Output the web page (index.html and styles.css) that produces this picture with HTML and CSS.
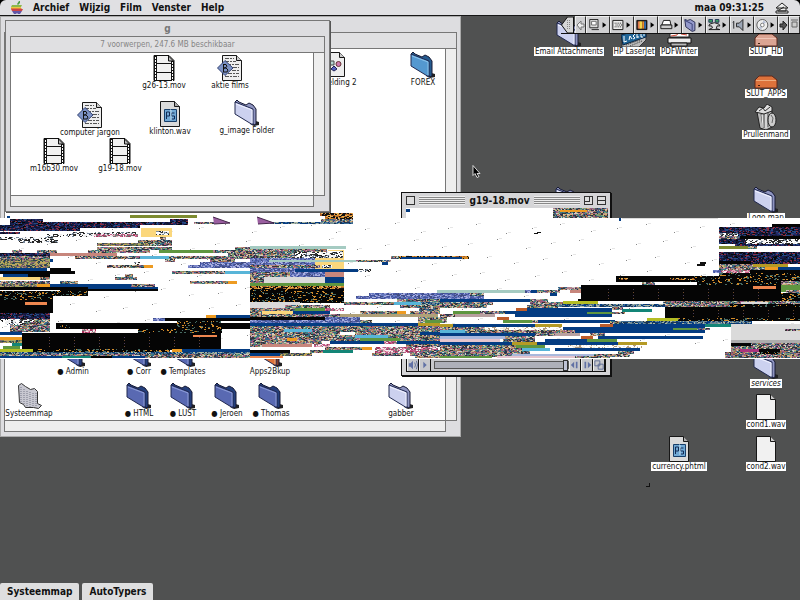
FILE: index.html
```html
<!DOCTYPE html>
<html lang="nl">
<head>
<meta charset="utf-8">
<title>Bureaublad</title>
<link rel="stylesheet" href="styles.css">
</head>
<body>
<svg class="defs" aria-hidden="true">
  <symbol id="folder" viewBox="0 0 26 26">
    <path d="M18 20l7 2v3l-5 1-4-2z" fill="#222"/>
    <path d="M1 2l2-2 2 2 7 3 3-2 4 2 3 4v15l-2 1z" fill="var(--side)" stroke="#181b35"/>
    <path d="M1 2l18 7v16L1 14z" fill="var(--face)" stroke="#20284f"/>
    <path d="M2 4l16 6v13" fill="none" stroke="var(--shine)"/>
  </symbol>
  <symbol id="film" viewBox="0 0 26 26">
    <path d="M3 .5h15l5 5v20H3z" fill="#f1f1f1" stroke="#111"/>
    <path d="M4.500 1v24M21.500 6v20" stroke="#111" stroke-width="3"/>
    <path d="M4.500 2v23M21.500 7v19" stroke="#fff" stroke-width="1" stroke-dasharray="2 1"/>
    <path d="M6 8.500h14M6 17.500h14" stroke="#111"/><path d="M17.500 1v5h5z" fill="#bbb" stroke="#111"/>
  </symbol>
  <symbol id="doc" viewBox="0 0 26 26">
    <path d="M3.500 .5h14l5 5v20h-19z" fill="#f1f1f1" stroke="#171717"/>
    <path d="M17.500 .5v5h5" fill="#ccc" stroke="#171717"/>
  </symbol>
  <symbol id="bbedit" viewBox="0 0 26 26">
    <path d="M5.500 .5h14l5 5v20h-19z" fill="#eee" stroke="#171717"/><path d="M19.500 .5v5h5" fill="#ccc" stroke="#171717"/>
    <path d="M8 3.500h9M8 6.500h11M10 9.500h12M16 12.500h6M15 15.500h7M11 18.500h11M8 21.500h14" stroke="#555" stroke-dasharray="4 1 2 1"/>
    <path d="M.5 13L8 5.500l8 7.500-8 7.500z" fill="#7c92c5" stroke="#334273"/>
    <path d="M6.500 9v8M6 9.500h3l1 2-2 1.500h-1 2l2 2-1 2H6" fill="none" stroke="#111"/>
  </symbol>
  <symbol id="photo" viewBox="0 0 26 26">
    <path d="M3.500 .5h14l5 5v20h-19z" fill="#dadada" stroke="#171717"/><path d="M17.500 .5v5h5" fill="#aaa" stroke="#171717"/>
    <path d="M7.500 8.500h12v12h-12z" fill="#71a9d5" stroke="#173e69"/>
    <path d="M9.500 18v-7h3v4h-3M17.500 12h-3v3h3v3h-3" fill="none" stroke="#122b54"/><path d="M13 9h1v10" stroke="#c3dff0" fill="none"/>
  </symbol>
  <symbol id="image" viewBox="0 0 26 26">
    <path d="M3.500 .5h15l5 5v19h-20z" fill="#eee" stroke="#171717"/><path d="M18.500 .5v5h5" fill="#ccc" stroke="#171717"/>
    <path d="M8 9h5v4H8z" fill="#b6d5d1" stroke="#444"/><circle cx="17.500" cy="12" r="2.500" fill="#ce7aaf" stroke="#633"/>
    <path d="M10 17l3-3 3 3-3 2z" fill="#5762c0" stroke="#225"/>
  </symbol>
  <symbol id="system" viewBox="0 0 26 26">
    <path d="M2.500 2.500l3-2 4 3 5 3 4-1 3 3v12l4 2-3 3-5-1-8 0-2-3-4-2z" fill="#c8c8d1" stroke="#333"/>
    <path d="M5 4v16M8 6v15M11 8v16M14 9v15M17 10v14M20 10v13" stroke="#777989" stroke-dasharray="1 1"/>
  </symbol>
  <symbol id="drive" viewBox="0 0 26 26">
    <path d="M2 17l4-4h13l5 4v8H2z" fill="var(--face)" stroke="#5d281c"/><path d="M3 17.500h20" stroke="var(--shine)"/>
    <path d="M5 22.500h2" stroke="#421"/>
  </symbol>
  <symbol id="trash" viewBox="0 0 26 26">
    <path d="M4 8l3 16 6 2 6-3V7z" fill="#bbb" stroke="#222"/>
    <path d="M8 10l2 13M11 10v14M15 9v14" stroke="#555"/><path d="M9 11l1 12M13 10v14" stroke="#eee"/>
    <path d="M2 8l4-5 5 1 3-4 5 3v4l-8 3z" fill="#ddd" stroke="#222"/><path d="M6 7l4-3 2 3 5-4" fill="none" stroke="#333"/>
    <ellipse cx="19" cy="16" rx="4" ry="7" fill="#ccc" stroke="#222"/><path d="M18 11l2 3-1 5" fill="none" stroke="#666"/>
  </symbol>
  <symbol id="laser" viewBox="0 0 26 26">
    <path d="M1 14l24-5v10l-7 7H1z" fill="#bbb" stroke="#333"/><path d="M0 14l25-7v9L2 24z" fill="#1f6496" stroke="#0b2544"/>
    <path d="M3 15v6l3-1M8 19l1-4 2 3M14 13l-2 2 2 2-2 1M16 16h2M16 12v5M20 11v5l2 0M23 9v6" stroke="#fff" fill="none"/>
    <path d="M5 24l14-5M9 25l12-5" stroke="#333" stroke-dasharray="1 1"/>
  </symbol>
  <symbol id="writer" viewBox="0 0 26 26">
    <path d="M4 8h19v8H4z" fill="#fff" stroke="#222"/><path d="M5 15l6-1 2-4 2 3 6 1" stroke="#d24b39" fill="none"/>
    <path d="M2 17h23v5H2z" fill="#eee" stroke="#111"/><path d="M5 22h16v3H5z" fill="#bbb" stroke="#111"/>
  </symbol>
</svg>

<header class="menubar">
  <nav class="menus" aria-label="Menu">
    <button aria-label="Apple"><svg class="apple" viewBox="0 0 12 13"><path d="M6 3l2-3h1v2L7 4z" fill="#4f9e45"/><path d="M1 4h10l-1 2H0z" fill="#8cb84a"/><path d="M0 6h10v1H0z" fill="#e8c943"/><path d="M0 7h10l1 1H0z" fill="#e38239"/><path d="M0 8h12l-1 2H1z" fill="#cb4448"/><path d="M1 10h10l-2 3H7L6 12l-1 1H3z" fill="#6256a7"/></svg></button>
    <button>Archief</button><button>Wijzig</button><button>Film</button><button>Venster</button><button>Help</button>
  </nav>
  <time>maa 09:31:25</time>
  <button aria-label="Programma’s"><svg class="appicon" viewBox="0 0 14 12"><path d="M1 6l6-5 6 5zM3 6v3h8V6M1 9h12v2H1z" fill="#eee" stroke="#222"/><path d="M4 8l5-3" stroke="#222"/></svg></button>
</header>

<main class="desktop">
  <section class="window back-window" aria-label="Map">
    <div class="titlebar"></div>
    <div class="info"></div>
    <div class="pane">
      <div class="item afbeelding"><svg><use href="#image"/></svg><span>Afbeelding 2</span></div>
      <div class="item forex sky"><svg><use href="#folder"/></svg><span>FOREX</span></div>
      <div class="item admin blue"><svg><use href="#folder"/></svg><span>● Admin</span></div>
      <div class="item corr blue"><svg><use href="#folder"/></svg><span>● Corr</span></div>
      <div class="item templates blue"><svg><use href="#folder"/></svg><span>● Templates</span></div>
      <div class="item apps orange"><svg><use href="#folder"/></svg><span>Apps2Bkup</span></div>
      <div class="item systeem"><svg><use href="#system"/></svg><span>Systeemmap</span></div>
      <div class="item html blue"><svg><use href="#folder"/></svg><span>● HTML</span></div>
      <div class="item lust blue"><svg><use href="#folder"/></svg><span>● LUST</span></div>
      <div class="item jeroen blue"><svg><use href="#folder"/></svg><span>● Jeroen</span></div>
      <div class="item thomas blue"><svg><use href="#folder"/></svg><span>● Thomas</span></div>
      <div class="item gabber"><svg><use href="#folder"/></svg><span>gabber</span></div>
    </div>
    <div class="vscroll"></div><div class="hscroll"></div><div class="corner"></div>
  </section>

  <section class="window g-window" aria-label="g">
    <h1 class="titlebar">g</h1>
    <div class="info">7 voorwerpen, 247.6 MB beschikbaar</div>
    <div class="pane">
      <div class="item g26"><svg><use href="#film"/></svg><span>g26-13.mov</span></div>
      <div class="item aktie"><svg><use href="#bbedit"/></svg><span>aktie films</span></div>
      <div class="item jargon"><svg><use href="#bbedit"/></svg><span>computer jargon</span></div>
      <div class="item klinton"><svg><use href="#photo"/></svg><span>klinton.wav</span></div>
      <div class="item gimage"><svg><use href="#folder"/></svg><span>g_image Folder</span></div>
      <div class="item m16"><svg><use href="#film"/></svg><span>m16b30.mov</span></div>
      <div class="item g19"><svg><use href="#film"/></svg><span>g19-18.mov</span></div>
    </div>
    <div class="vscroll"></div><div class="hscroll"></div><div class="corner"></div>
  </section>

  <div class="item boxed email"><svg><use href="#folder"/></svg><span>Email Attachments</span></div>
  <div class="item boxed hp"><svg><use href="#laser"/></svg><span>HP LaserJet</span></div>
  <div class="item boxed pdf"><svg><use href="#writer"/></svg><span>PDFWriter</span></div>
  <div class="item boxed hd pink"><svg><use href="#drive"/></svg><span>SLUT_HD</span></div>
  <div class="item boxed slutapps orange"><svg><use href="#drive"/></svg><span>SLUT_APPS</span></div>
  <div class="item boxed prullen"><svg><use href="#trash"/></svg><span>Prullenmand</span></div>
  <div class="item boxed logo"><svg><use href="#folder"/></svg><span>Logo map</span></div>
  <div class="item boxed services"><svg><use href="#folder"/></svg><span><i>services</i></span></div>
  <div class="item boxed cond1"><svg><use href="#doc"/></svg><span>cond1.wav</span></div>
  <div class="item boxed cond2"><svg><use href="#doc"/></svg><span>cond2.wav</span></div>
  <div class="item boxed currency"><svg><use href="#photo"/></svg><span>currency.phtml</span></div>
  <div class="item hidden-folder"><svg><use href="#folder"/></svg></div>
  <i class="crumb"></i>

  <section class="movie" aria-label="g19-18.mov">
    <div class="movie-title"><button class="box" aria-label="Sluit"></button><i class="grip"></i><h2>g19-18.mov</h2><i class="grip"></i><button class="box zoom" aria-label="Zoom"></button><button class="box fold" aria-label="Vouw"></button></div>
    <div class="screen"></div>
    <div class="player">
      <button aria-label="Volume"><svg viewBox="0 0 12 12"><path d="M1 4h2l3-3v10L3 8H1z"/><path d="M8 3q2 3 0 6M10 1q3 5 0 10" class="line"/></svg></button>
      <button aria-label="Speel"><svg viewBox="0 0 12 12"><path d="M4 2l4 4-4 4z"/></svg></button>
      <input type="range" aria-label="Positie" value="100">
      <button aria-label="Terug"><svg viewBox="0 0 12 12"><path d="M5 2v8L1 6zM7 2h2v8H7z"/></svg></button>
      <button aria-label="Vooruit"><svg viewBox="0 0 12 12"><path d="M7 2v8l4-4zM3 2h2v8H3z"/></svg></button>
      <button aria-label="Formaat"><svg viewBox="0 0 12 12"><path d="M1 1h6v6H1zM5 5h6v6H5z" class="line"/></svg></button>
    </div>
  </section>

  <canvas id="static" width="800" height="151"></canvas>

  <div class="strip">
    <button class="tab" aria-label="Regelstrip"><svg viewBox="0 0 13 16"><path d="M12 0H6L0 8l6 8h6z" fill="#d6d6d6" stroke="#111"/><path d="M6 3v10M8 3v10" stroke="#888" stroke-dasharray="1 1"/></svg></button>
    <button class="thin" aria-label="Links"><svg viewBox="0 0 9 16"><path d="M1 8l4-4v3h3v3H5v3z" fill="#eee" stroke="#777"/></svg></button>
    <button aria-label="AppleTalk"><svg viewBox="0 0 24 16"><path d="M3 2h9v9H3z" fill="#ddd" stroke="#222"/><path d="M5 4h5v4H5z" fill="#fff" stroke="#666"/><path d="M5 13h8" stroke="#222"/><path d="M17 5v6l4-3z"/></svg></button>
    <button aria-label="Bitdiepte"><svg viewBox="0 0 24 16"><path d="M2 3h11v10H2z" fill="#eee" stroke="#111"/><path d="M4 6h8M5 8h8M4 10h8" stroke="#111" stroke-dasharray="1 1"/><path d="M17 5v6l4-3z"/></svg></button>
    <button aria-label="Kleuren"><svg viewBox="0 0 24 16"><path d="M2 3h11v10H2z" fill="#111" stroke="#111"/><path d="M3 4h3v8H3z" fill="#dc7650"/><path d="M5 4h3v8H5z" fill="#eed64c"/><path d="M8 4h2v8H8z" fill="#eb8a26"/><path d="M10 4h2v8h-2z" fill="#356cab"/><path d="M17 5v6l4-3z"/></svg></button>
    <button aria-label="Printer"><svg viewBox="0 0 24 16"><path d="M5 3h7l1 5H3z" fill="#fff" stroke="#111"/><path d="M2 8h12v4H2z" fill="#ccc" stroke="#111"/><path d="M17 5v6l4-3z"/></svg></button>
    <button aria-label="Delen"><svg viewBox="0 0 24 16"><path d="M2 2l3 1 3-1 5 3v9l-3 1-7-5z" fill="#9499cb" stroke="#25294d"/><path d="M2 3l8 4v7" fill="none" stroke="#333b72"/><path d="M17 5v6l4-3z"/></svg></button>
    <button aria-label="Netwerk"><svg viewBox="0 0 24 16"><path d="M2 2h4v3H2zM9 2h4v3H9z" fill="#399f62" stroke="#235"/><path d="M3 7q5-3 10 0l1 2h-3l-1 3 4 1H2l4-2-1-2H2z" fill="#ddd" stroke="#111"/><path d="M17 5v6l4-3z"/></svg></button>
    <button aria-label="Geluid"><svg viewBox="0 0 24 16"><path d="M2 5l1-1v8M6 6h3l4-4v12L9 10H6z" fill="#9da7b7" stroke="#222"/><path d="M18 5v6l4-3z"/></svg></button>
    <button aria-label="CD"><svg viewBox="0 0 24 16"><circle cx="8" cy="8" r="6" fill="#eee" stroke="#555"/><path d="M8 8l-4 3 3 2zM8 8l4-3-3-2z" fill="#b8c1d7"/><circle cx="8" cy="8" r="2" fill="#fff" stroke="#777"/><path d="M17 5v6l4-3z"/></svg></button>
    <button class="thin" aria-label="Rechts"><svg viewBox="0 0 9 16"><path d="M8 8L4 4v3H1v3h3v3z" fill="#555" stroke="#222"/></svg></button>
    <button class="thin" aria-label="Einde"><svg viewBox="0 0 9 16"><path d="M2 5h5v5H2zM1 3h7" fill="#ccc" stroke="#666"/></svg></button>
  </div>
  <svg class="pointer" viewBox="0 0 9 13"><path d="M1 1v10l2-2 2 4 2-1-2-3h3z" fill="#000" stroke="#fff" stroke-width=".8"/></svg>
</main>

<footer class="tabs"><button>Systeemmap</button><button>AutoTypers</button></footer>
<script src="static.js"></script>
</body>
</html>
```
FILE: styles.css
```css
* { box-sizing: border-box; }
body { margin: 0; height: 100vh; overflow: hidden; display: flex; flex-direction: column; background: #505151; color: #111; font: 8px/9px "DejaVu Sans Condensed", "DejaVu Sans", sans-serif; }
button { margin: 0; padding: 0; border: 0; background: none; color: inherit; font: inherit; }
h1, h2 { margin: 0; }
svg { display: block; }
.defs { position: absolute; width: 0; height: 0; }

.menubar { height: 16px; flex: none; display: flex; align-items: center; padding: 0 11px; background: #e0e0e3; border-bottom: 1px solid #161616; border-radius: 6px 6px 0 0; font: bold 10px/14px "DejaVu Sans Condensed", "DejaVu Sans", sans-serif; box-shadow: 0 -6px 0 #000; }
.menus { display: flex; gap: 10px; margin-right: auto; }
.menubar time { margin-right: 11px; }
.apple { width: 12px; height: 13px; }
.appicon { width: 14px; height: 12px; }

.desktop { position: relative; flex: 1; }

.window { position: absolute; display: grid; grid-template: 15px 17px 1fr 12px / 1fr 12px; padding: 0 4px 4px; background: #dddde0; border: 1px solid #8b8b8e; border-top-color: #777; }
.back-window { left: 0; top: 0; width: 461px; height: 421px; padding-left: 3px; padding-right: 3px; border-color: #aaa; }
.g-window { left: 5px; top: 4px; width: 325px; height: 192px; border-color: #777; box-shadow: 1px 1px 0 #555; }
.titlebar { grid-column: 1 / 3; font: bold 10px/15px "DejaVu Sans Condensed", sans-serif; text-align: center; color: #777; }
.info { grid-column: 1 / 3; background: #e0e0e2; border: 1px solid #777; text-align: center; line-height: 16px; color: #858585; }
.pane { position: relative; overflow: hidden; background: #fff; border-left: 1px solid #777; }
.vscroll { background: #eee; border-left: 1px solid #777; border-right: 1px solid #777; }
.hscroll { background: #eee; border: 1px solid #777; border-right: 0; }
.corner { border-top: 1px solid #777; border-left: 1px solid #777; }

.item { --face: #ccd1ef; --side: #8e94c0; --shine: #f1f2ff; position: absolute; width: 90px; margin-left: -45px; display: flex; flex-direction: column; align-items: center; white-space: nowrap; }
.item svg { width: 26px; height: 26px; }
.boxed span { background: #fff; padding: 0 1px; }
.blue { --face: #5969b2; --side: #243f7c; --shine: #8e9ed8; }
.sky { --face: #5498d0; --side: #245b8f; --shine: #8bc4eb; }
.orange { --face: #dd723b; --side: #7d3b2a; --shine: #efac7d; }
.pink { --face: #dba493; --side: #946c67; --shine: #efc6b8; }

.afbeelding { left: 329px; top: 3px; }
.forex { left: 418px; top: 3px; }
.admin { left: 68px; top: 292px; }
.corr { left: 134px; top: 292px; }
.templates { left: 178px; top: 292px; }
.apps { left: 265px; top: 292px; }
.systeem { left: 24px; top: 334px; }
.html { left: 134px; top: 334px; }
.lust { left: 178px; top: 334px; }
.jeroen { left: 222px; top: 334px; }
.thomas { left: 266px; top: 334px; }
.gabber { left: 396px; top: 334px; }

.g26 { left: 153px; top: 2px; }
.aktie { left: 219px; top: 2px; }
.jargon { left: 79px; top: 49px; }
.klinton { left: 159px; top: 48px; }
.gimage { left: 236px; top: 47px; }
.m16 { left: 43px; top: 85px; }
.g19 { left: 109px; top: 85px; }

.email { left: 569px; top: 5px; }
.hp { left: 634px; top: 5px; }
.pdf { left: 679px; top: 5px; }
.hd { left: 766px; top: 5px; }
.slutapps { left: 766px; top: 47px; }
.prullen { left: 766px; top: 88px; }
.logo { left: 766px; top: 171px; }
.services { left: 766px; top: 337px; }
.cond1 { left: 766px; top: 378px; }
.cond2 { left: 766px; top: 420px; }
.currency { left: 679px; top: 420px; }
.hidden-folder { left: 568px; top: 171px; }
.crumb { position: absolute; left: 646px; top: 467px; width: 4px; height: 4px; border: solid #111; border-width: 0 1px 1px 0; }

.movie { position: absolute; left: 401px; top: 176px; width: 210px; height: 184px; display: flex; flex-direction: column; padding: 0 4px 3px; background: #d5d5d7; border: 1px solid #111; box-shadow: 1px 1px 0 #111; }
.movie-title { height: 15px; display: flex; align-items: center; gap: 4px; }
.movie-title h2 { font: bold 10px/14px "DejaVu Sans Condensed", sans-serif; }
.grip { flex: 1; height: 9px; background: repeating-linear-gradient(#eee 0 1px, #888 1px 2px); }
.box { width: 9px; height: 9px; border: 1px solid #333; background: #ddd; }
.zoom { background: linear-gradient(#333, #333) 4px 0 / 1px 5px no-repeat, linear-gradient(#333, #333) 0 4px / 5px 1px no-repeat, #ddd; }
.fold { background: linear-gradient(#333, #333) 0 3px / 9px 1px no-repeat, #ddd; }
.screen { flex: 1; background: #fff; }
.player { height: 14px; display: flex; border: 1px solid #111; background: #c7c8cc; }
.player button { width: 12px; border-right: 1px solid #111; border-left: 1px solid #eee; }
.player svg { width: 10px; height: 12px; fill: #6171a5; }
.line { fill: none; stroke: #52628f; }
.player input { appearance: none; flex: 1; min-width: 0; height: 8px; margin: 2px 0 2px 3px; border: 1px solid #555; background: #aeb0b9; }
.player input::-webkit-slider-thumb { appearance: none; width: 5px; height: 11px; border: 1px solid #333; background: #bec3d6; }

#static { position: absolute; left: 0; top: 192px; image-rendering: pixelated; }

.strip { position: absolute; right: 0; top: 0; height: 18px; display: flex; border-bottom: 1px solid #111; }
.strip button { width: 24px; height: 17px; background: #cfcfd1; border-right: 1px solid #333; border-left: 1px solid #eee; border-top: 1px solid #eee; }
.strip svg { width: 100%; height: 16px; }
.strip .tab { width: 14px; background: none; border: 0; }
.strip .thin { width: 11px; }
.pointer { position: absolute; left: 472px; top: 148px; width: 9px; height: 14px; }

.tabs { display: flex; gap: 3px; height: 17px; flex: none; font: bold 10px/17px "DejaVu Sans Condensed", sans-serif; }
.tabs button { padding: 0 7px; background: #dededf; border-radius: 2px 2px 0 0; }
```
FILE: static.js
```js
const canvas = document.getElementById('static');
const ctx = canvas.getContext('2d');
const TOP = 208;
let seed = 1918;
function rnd() {
  seed = (seed * 1664525 + 1013904223) >>> 0;
  return seed / 4294967296;
}
const B = '#043c82', K = '#050505', W = '#ffffff', G = '#5f9640', T = '#138577';
const C = '#58b5d8', O = '#ed9b22', Y = '#fbd77c', A = '#a5cbc2', S = '#c7867c';
const L = '#dadada', Q = '#b4bd24', D = '#b59a25', M = '#b8a0a0', R = '#ee8750', V = '#7d8b30';
const X = '#bd5c2a', E = '#a9b8dc', P = '#e5c5ce';
const palettes = {
  n: ['#2b3547', '#37658a', '#a66f50', '#cbb07c', '#7f9c73', '#9d5b82', '#cfcdc0', '#52526b', '#3e8480', '#363636', '#b48690'],
  b: ['#101632', '#162052', '#252a66', '#080808', '#101632', '#244b85', '#882e43', '#18183c'],
  k: ['#050505', '#050505', '#050505', '#050505', '#050505', '#d28b2b', '#050505', '#466b63', '#050505', '#050505'],
  p: ['#5260a8', '#7985c7', '#4454a0', '#a9afe0', '#424d83', '#6479bf'],
  w: ['#ffffff', '#333333', '#ffffff', '#77879a', '#222222', '#eeeeee'],
  t: ['#ffffff', '#ffffff', '#f0e8d8', '#b09a80', '#ffffff'],
  r: ['#c65c89', '#e4a3b4', '#f4edf0', '#a6355d', '#777777'],
  o: ['#111111', '#d58a26', '#111111', '#aa5f28', '#e9b45b'],
  u: ['#043c82', '#3e6d93', '#a9b5a1', '#1b3554', '#728b95'],
  y: ['#77814b', '#a5a669', '#4d5b54', '#c3a65b', '#2a4054', '#8b6575']
};
// Each band: y, height, then triples of x start, x end, fill.
const bands = [
  [208,10, 406,552,W, 553,608,'n'], [210,2, 560,587,O], [209,3, 406,410,B],
  [213,3, 320,353,'o'], [216,3, 325,353,'o'], [219,3, 321,353,'n'], [222,2, 270,353,'u', 194,214,'n'],
  [215,3, 130,197,V], [216,2, 7,10,B],
  [219,3, 10,43,'b', 170,188,'b'], [222,3, 10,188,'b'], [225,3, 0,140,'b'], [228,3, 0,80,'b'],
  [228,9, 141,172,Y], [231,4, 156,169,'w'],
  [232,2, 0,20,'b', 72,138,'w'], [234,3, 47,94,'w', 94,138,'r'],
  [237,3, 0,54,'w', 160,166,'n'], [240,3, 18,58,'w', 138,172,'n'], [243,3, 97,150,'y', 150,172,'n'],
  [247,3, 97,172,'n', 235,250,'n'],
  [250,3, 12,22,'n', 37,57,'n', 88,150,'n', 159,213,G, 213,270,'n'],
  [253,3, 0,50,'b', 50,117,S, 228,270,'n'], [256,3, 0,50,'n', 75,140,'n', 140,169,C, 169,250,'n'],
  [259,3, 0,50,'y', 50,53,B, 165,175,'n', 210,235,'n'],
  [262,3, 0,50,'y', 134,140,'w', 200,270,'p'], [265,3, 0,50,'y', 107,144,'n', 144,153,O, 188,270,'p'],
  [268,3, 0,47,B, 50,71,K], [271,3, 0,75,K, 172,225,'n', 225,250,C],
  [274,3, 3,28,B, 28,50,K, 125,133,'n'], [277,3, 0,40,Y, 115,137,'n', 40,50,'n'],
  [281,3, 0,50,'n', 60,78,'n', 190,228,'n', 228,237,O], [284,3, 0,37,'y', 37,50,O, 50,131,B, 131,155,'n'],
  [287,3, 0,88,K, 88,158,B], [289,2, 60,158,K],
  [291,5, 0,88,'k'], [296,4, 0,53,'k'], [300,13, 0,53,K], [302,3, 25,47,R],
  [313,6, 0,50,'b'], [319,3, 0,34,'w', 34,50,'n'], [322,3, 5,25,'w', 25,50,'n'], [325,7, 10,50,'n'],
  [315,3, 206,216,O, 216,250,B], [318,3, 153,165,'p', 165,250,K],
  [323,6, 56,250,K], [325,3, 60,70,'k'], [321,12, 177,221,'k'], [329,4, 138,222,'k', 82,96,'r'], [333,17, 22,221,K],
  [332,3, 0,22,B], [335,2, 193,217,R], [337,3, 0,22,O], [340,3, 0,22,'y'], [343,3, 12,22,T], [346,3, 3,20,G],
  [349,3, 0,33,Q, 33,170,'k', 172,182,O, 182,250,B], [352,2, 0,250,'u'], [354,2, 0,250,'n'], [356,2, 0,62,B, 62,91,T, 91,112,K, 112,145,B, 145,250,'n'],
  // Central picture block.
  [246,3, 250,346,A], [249,3, 250,327,'n'], [252,6, 250,344,'n', 295,327,'w'], [250,8, 328,344,Y], [251,7, 327,343,'w'],
  [258,12, 250,318,'p', 315,344,Y], [260,2, 269,356,A, 356,391,'n'], [256,3, 391,399,'n', 399,469,'o'], [257,2, 401,462,B], [262,3, 382,388,B],
  [265,3, 250,320,'n', 322,332,'w'], [269,3, 250,295,'p', 295,358,B, 358,371,'w'], [272,6, 250,290,'n', 290,325,'p', 325,344,S],
  [277,6, 250,264,'n', 264,325,L, 325,344,B], [283,3, 250,344,G], [286,3, 250,344,'o'], [289,14, 250,344,'k'], [289,2, 288,344,K],
  [290,3, 437,440,A], [293,3, 369,440,'p'], [296,3, 356,440,'p'],
  [299,3, 397,440,'n'], [302,3, 250,300,L, 344,394,'n', 394,421,C, 421,440,'u'],
  [305,3, 250,285,L, 285,330,'n', 400,440,'n'], [308,3, 250,295,'n', 295,325,G, 325,344,'r', 419,440,'n'],
  [311,3, 250,262,'n', 262,293,Y, 293,330,B, 360,397,'n', 397,406,O, 410,440,'n'],
  [314,3, 250,340,'n', 340,438,'#b0a078'],
  [317,6, 250,360,'p', 418,447,'n'], [317,3, 250,325,K], [320,3, 360,372,'n', 425,442,G],
  [323,3, 250,418,B, 418,440,D], [326,3, 250,440,'n'], [329,3, 250,284,'n', 284,312,C, 312,440,'n'],
  [332,3, 250,340,'n', 355,420,'n', 420,440,B], [335,3, 250,355,'n', 355,388,C, 388,440,'n'],
  [338,3, 250,287,'n', 287,297,O, 297,360,'n', 360,400,G, 400,440,'n'],
  [341,3, 250,322,'n', 330,384,B, 384,397,'r', 397,440,B],
  [344,3, 250,262,'n', 262,312,S, 314,330,'r', 406,440,'n'], [347,3, 325,362,'n', 362,372,O, 375,438,'r'],
  [350,3, 250,290,K, 310,323,'n', 323,353,T, 375,420,'r', 420,440,'n'], [353,3, 250,280,B, 280,312,'y', 372,403,'n', 410,440,'n'],
  [356,2, 250,283,R, 415,440,'n'],
  // Stepped stripes leading to the right.
  [287,3, 558,581,'n'], [290,3, 440,525,A, 525,531,'p', 531,537,B, 537,560,'n', 570,581,S],
  [293,3, 440,470,'p', 470,484,'n', 550,557,B], [296,3, 440,484,'p'], [299,3, 440,530,B, 530,548,'n'],
  [302,3, 440,493,'n', 530,563,'n'], [305,3, 440,487,'n', 527,558,'n'],
  [308,3, 516,527,X, 527,612,B], [311,3, 453,480,G, 480,515,'n', 505,612,B], [314,3, 440,455,'n', 455,495,M, 515,612,B],
  [317,3, 497,509,X], [320,3, 503,532,G, 532,538,'n', 538,615,B],
  [324,3, 440,453,D, 453,535,B, 535,562,D, 600,613,X, 613,705,B], [327,3, 440,485,'n', 485,563,'t', 563,705,B],
  [330,3, 440,465,C, 465,575,'n', 575,705,B], [333,3, 440,535,B, 535,555,'n', 555,580,M, 590,605,'n'],
  [336,3, 440,505,E, 505,535,'n', 581,593,X, 598,703,B], [339,3, 440,500,P, 503,535,'n', 545,587,B, 587,617,G],
  [342,3, 440,512,B, 512,537,D, 537,618,B, 618,647,D], [345,3, 440,516,'n', 516,545,G, 566,642,'t'],
  [348,3, 440,522,'n', 522,550,C, 555,640,B], [351,3, 440,530,'n', 618,634,'n'],
  [354,3, 440,530,'n', 512,594,E, 594,630,'n'], [356,2, 440,492,G, 497,575,P, 575,610,'n'],
  // Right side.
  [224,3, 772,800,K], [227,9, 719,800,'b'], [233,3, 719,738,'w'], [236,4, 740,800,K, 719,740,'n'],
  [239,5, 745,800,'w', 719,745,'b'], [244,2, 735,800,'b'], [246,3, 719,748,V, 748,757,'n', 757,800,W],
  [252,9, 719,800,'b'], [261,3, 719,751,K, 751,800,'b'], [264,3, 719,753,'n', 753,788,D], [267,3, 719,765,'n', 765,778,O, 778,800,B],
  [270,3, 713,721,'p', 721,750,'r', 750,800,K], [273,3, 719,800,'k'],
  [276,6, 616,690,K, 690,800,'k'], [278,2, 619,628,'o', 670,695,'o'], [282,3, 642,655,'n', 655,697,W, 697,800,'k'],
  [285,16, 581,781,K], [286,3, 753,776,R], [281,11, 781,800,G], [281,4, 781,800,'n'], [290,4, 786,800,'n'],
  [293,25, 787,800,'k'], [293,8, 781,800,'k'],
  [299,2, 578,640,K],
  [301,3, 563,598,Q, 598,663,W, 663,800,'n'], [302,2, 741,768,L],
  [304,3, 558,665,'u', 665,730,'n', 730,800,'k'], [307,11, 665,800,K], [307,3, 612,623,'n'],
  [309,3, 622,652,T], [312,2, 587,612,G, 612,625,'n'],
  [318,3, 647,678,Q, 678,800,'k'], [321,3, 610,619,'n', 619,752,'u'],
  [324,3, 705,753,T], [328,2, 673,699,G, 697,710,'n'],
  [324,16, 731,800,L], [329,2, 785,800,'n'], [340,3, 731,800,'#adadad'], [343,3, 731,751,K, 751,800,'n'],
  [346,3, 731,800,'n'], [349,3, 740,759,'#aa347d', 759,780,K, 731,740,'n', 780,800,'n'], [352,6, 725,800,'n'], [351,3, 760,778,'k']
];

ctx.fillStyle = W;
ctx.fillRect(0, 218 - TOP, 800, 141);
ctx.fillStyle = L;
ctx.fillRect(622, 218 - TOP, 96, 1);
ctx.fillStyle = B;
ctx.fillRect(619, 218 - TOP, 2, 3);

// Faint speckles scattered along slanted rows.
for (let row = 0; row < 8; row++) {
  for (let col = 0; col < 29; col++) {
    const x = col * 28 + (row * 19) % 28 + Math.floor(rnd() * 4);
    const y = 23 + row * 16 - (col % 3) * 4 + Math.floor(rnd() * 3);
    ctx.fillStyle = '#888';
    ctx.fillRect(x, y, 1, 1);
    ctx.fillStyle = '#e6e6e6';
    ctx.fillRect(x + 2, y - 1, 3, 1);
  }
}

function noise(x0, x1, y, h, colors) {
  for (let yy = y; yy < y + h; yy++) {
    for (let x = x0; x < x1;) {
      const run = 1 + Math.floor(rnd() * 2);
      ctx.fillStyle = colors[Math.floor(rnd() * colors.length)];
      ctx.fillRect(x, yy - TOP, Math.min(run, x1 - x), 1);
      x += run;
    }
  }
}

for (const [y, h, ...parts] of bands) {
  for (let i = 0; i < parts.length; i += 3) {
    const [x0, x1, fill] = parts.slice(i, i + 3);
    if (palettes[fill]) {
      noise(x0, x1, y, h, palettes[fill]);
    } else {
      ctx.fillStyle = fill;
      ctx.fillRect(x0, y - TOP, x1 - x0, h);
    }
  }
}

// Dotted columns inside the black blocks.
function dots(x0, x1, y0, y1) {
  for (let x = x0; x < x1; x += 25) {
    for (let y = y0; y < y1; y += 3) {
      ctx.fillStyle = y % 2 ? '#4a3a5c' : '#6b4a2c';
      ctx.fillRect(x, y - TOP, 1, 1);
    }
  }
}
dots(49, 220, 337, 348);
dots(608, 780, 289, 300);
dots(693, 800, 310, 318);

// Purple folder tips.
for (const x of [213, 257]) {
  ctx.fillStyle = '#9a5fa0';
  ctx.beginPath();
  ctx.moveTo(x, 217 - TOP);
  ctx.lineTo(x + 17, 223 - TOP);
  ctx.lineTo(x + 1, 224 - TOP);
  ctx.fill();
  ctx.strokeStyle = '#44264a';
  ctx.stroke();
}

ctx.fillStyle = '#111';
ctx.fillRect(534, 233 - TOP, 4, 1);
ctx.fillRect(537, 232 - TOP, 4, 1);
ctx.fillRect(697, 264 - TOP, 8, 2);
ctx.fillRect(700, 262 - TOP, 6, 2);
```
